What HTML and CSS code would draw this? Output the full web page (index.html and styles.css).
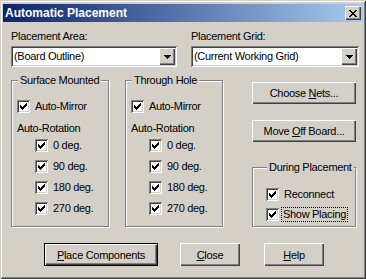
FILE: index.html
```html
<!DOCTYPE html>
<html>
<head>
    <meta http-equiv="Content-Type" content="text/html;charset=UTF-8"/>
    <title>Automatic Placement</title>
    <link rel="stylesheet" href="styles.css">
</head>
<body>
<div class="window">
    <div class="titlebar">
        <span class="title">Automatic Placement</span>
        <span class="close-btn">
            <svg width="8" height="7" viewBox="0 0 8 7" shape-rendering="crispEdges"><path d="M0 0h2v1h-2z M6 0h2v1h-2z M1 1h2v1h-2z M5 1h2v1h-2z M2 2h4v1h-4z M3 3h2v1h-2z M2 4h4v1h-4z M1 5h2v1h-2z M5 5h2v1h-2z M0 6h2v1h-2z M6 6h2v1h-2z" fill="#000"/></svg>
        </span>
    </div>
    <div class="client">
        <div class="fields">
            <div class="field field-area">
                <div class="label">Placement Area:</div>
                <div class="combo">
                    <span class="combo-text">(Board Outline)</span>
                    <span class="drop-btn"><svg width="7" height="4" viewBox="0 0 7 4" shape-rendering="crispEdges"><path d="M0 0h7v1h-7z M1 1h5v1h-5z M2 2h3v1h-3z M3 3h1v1h-1z" fill="#000"/></svg></span>
                </div>
            </div>
            <div class="field field-grid">
                <div class="label">Placement Grid:</div>
                <div class="combo">
                    <span class="combo-text">(Current Working Grid)</span>
                    <span class="drop-btn"><svg width="7" height="4" viewBox="0 0 7 4" shape-rendering="crispEdges"><path d="M0 0h7v1h-7z M1 1h5v1h-5z M2 2h3v1h-3z M3 3h1v1h-1z" fill="#000"/></svg></span>
                </div>
            </div>
        </div>

        <div class="groups">
            <div class="group group-side">
                <span class="group-title">Surface Mounted</span>
                <div class="check-row first"><span class="check"><svg width="7" height="7" viewBox="0 0 7 7" shape-rendering="crispEdges"><path d="M6 0h1v3h-1z M5 1h1v3h-1z M4 2h1v3h-1z M3 3h1v3h-1z M2 4h1v3h-1z M1 3h1v3h-1z M0 2h1v3h-1z"/></svg></span><span>Auto-Mirror</span></div>
                <div class="sub-label">Auto-Rotation</div>
                <div class="rotations">
                    <div class="check-row"><span class="check"><svg width="7" height="7" viewBox="0 0 7 7" shape-rendering="crispEdges"><path d="M6 0h1v3h-1z M5 1h1v3h-1z M4 2h1v3h-1z M3 3h1v3h-1z M2 4h1v3h-1z M1 3h1v3h-1z M0 2h1v3h-1z"/></svg></span><span>0 deg.</span></div>
                    <div class="check-row"><span class="check"><svg width="7" height="7" viewBox="0 0 7 7" shape-rendering="crispEdges"><path d="M6 0h1v3h-1z M5 1h1v3h-1z M4 2h1v3h-1z M3 3h1v3h-1z M2 4h1v3h-1z M1 3h1v3h-1z M0 2h1v3h-1z"/></svg></span><span>90 deg.</span></div>
                    <div class="check-row"><span class="check"><svg width="7" height="7" viewBox="0 0 7 7" shape-rendering="crispEdges"><path d="M6 0h1v3h-1z M5 1h1v3h-1z M4 2h1v3h-1z M3 3h1v3h-1z M2 4h1v3h-1z M1 3h1v3h-1z M0 2h1v3h-1z"/></svg></span><span>180 deg.</span></div>
                    <div class="check-row"><span class="check"><svg width="7" height="7" viewBox="0 0 7 7" shape-rendering="crispEdges"><path d="M6 0h1v3h-1z M5 1h1v3h-1z M4 2h1v3h-1z M3 3h1v3h-1z M2 4h1v3h-1z M1 3h1v3h-1z M0 2h1v3h-1z"/></svg></span><span>270 deg.</span></div>
                </div>
            </div>

            <div class="group group-side group-hole">
                <span class="group-title">Through Hole</span>
                <div class="check-row first"><span class="check"><svg width="7" height="7" viewBox="0 0 7 7" shape-rendering="crispEdges"><path d="M6 0h1v3h-1z M5 1h1v3h-1z M4 2h1v3h-1z M3 3h1v3h-1z M2 4h1v3h-1z M1 3h1v3h-1z M0 2h1v3h-1z"/></svg></span><span>Auto-Mirror</span></div>
                <div class="sub-label">Auto-Rotation</div>
                <div class="rotations">
                    <div class="check-row"><span class="check"><svg width="7" height="7" viewBox="0 0 7 7" shape-rendering="crispEdges"><path d="M6 0h1v3h-1z M5 1h1v3h-1z M4 2h1v3h-1z M3 3h1v3h-1z M2 4h1v3h-1z M1 3h1v3h-1z M0 2h1v3h-1z"/></svg></span><span>0 deg.</span></div>
                    <div class="check-row"><span class="check"><svg width="7" height="7" viewBox="0 0 7 7" shape-rendering="crispEdges"><path d="M6 0h1v3h-1z M5 1h1v3h-1z M4 2h1v3h-1z M3 3h1v3h-1z M2 4h1v3h-1z M1 3h1v3h-1z M0 2h1v3h-1z"/></svg></span><span>90 deg.</span></div>
                    <div class="check-row"><span class="check"><svg width="7" height="7" viewBox="0 0 7 7" shape-rendering="crispEdges"><path d="M6 0h1v3h-1z M5 1h1v3h-1z M4 2h1v3h-1z M3 3h1v3h-1z M2 4h1v3h-1z M1 3h1v3h-1z M0 2h1v3h-1z"/></svg></span><span>180 deg.</span></div>
                    <div class="check-row"><span class="check"><svg width="7" height="7" viewBox="0 0 7 7" shape-rendering="crispEdges"><path d="M6 0h1v3h-1z M5 1h1v3h-1z M4 2h1v3h-1z M3 3h1v3h-1z M2 4h1v3h-1z M1 3h1v3h-1z M0 2h1v3h-1z"/></svg></span><span>270 deg.</span></div>
                </div>
            </div>

            <div class="side-col">
                <div class="btn btn-nets"><span>Choose <u>N</u>ets...</span></div>
                <div class="btn btn-move"><span>Move <u>O</u>ff Board...</span></div>
                <div class="group group-during">
                    <span class="group-title">During Placement</span>
                    <div class="check-row first"><span class="check"><svg width="7" height="7" viewBox="0 0 7 7" shape-rendering="crispEdges"><path d="M6 0h1v3h-1z M5 1h1v3h-1z M4 2h1v3h-1z M3 3h1v3h-1z M2 4h1v3h-1z M1 3h1v3h-1z M0 2h1v3h-1z"/></svg></span><span>Reconnect</span></div>
                    <div class="check-row"><span class="check"><svg width="7" height="7" viewBox="0 0 7 7" shape-rendering="crispEdges"><path d="M6 0h1v3h-1z M5 1h1v3h-1z M4 2h1v3h-1z M3 3h1v3h-1z M2 4h1v3h-1z M1 3h1v3h-1z M0 2h1v3h-1z"/></svg></span><span class="focus">Show Placing</span></div>
                </div>
            </div>
        </div>

        <div class="actions">
            <div class="btn btn-default btn-place"><span><u>P</u>lace Components</span></div>
            <div class="btn btn-close"><span><u>C</u>lose</span></div>
            <div class="btn btn-help"><span><u>H</u>elp</span></div>
        </div>
    </div>
</div>
</body>
</html>
```

FILE: styles.css
```css
* {
    box-sizing: border-box;
}

html, body {
    margin: 0;
    padding: 0;
}

body {
    font-family: "Liberation Sans", Arial, sans-serif;
    font-size: 11px;
    letter-spacing: -0.3px;
    color: #000;
    background: #d4d0c8;
}

.window {
    width: 366px;
    height: 279px;
    background: #d4d0c8;
    padding: 4px 3px 4px 3px;
    box-shadow: inset 1px 1px 0 #d4d0c8, inset -1px -1px 0 #404040,
                inset 2px 2px 0 #fff, inset -2px -2px 0 #808080;
    display: flex;
    flex-direction: column;
}

.titlebar {
    height: 18px;
    display: flex;
    align-items: center;
    padding-left: 2px;
    background: linear-gradient(to right, #0a246a, #a6caf0);
}

.title {
    color: #fff;
    font-weight: bold;
    font-size: 12px;
    letter-spacing: 0;
}

.close-btn {
    width: 16px;
    height: 14px;
    margin-left: auto;
    margin-right: 2px;
    background: #d4d0c8;
    display: flex;
    align-items: center;
    justify-content: center;
    box-shadow: inset 1px 1px 0 #fff, inset -1px -1px 0 #404040, inset -2px -2px 0 #808080;
}

.client {
    padding: 8px 0 0 8px;
}

.label {
    line-height: 13px;
}

.fields {
    display: flex;
    gap: 14px;
}

.field-area {
    width: 166px;
}

.field-grid {
    width: 168px;
}

.combo {
    margin-top: 3px;
    height: 21px;
    background: #fff;
    display: flex;
    align-items: center;
    padding: 2px;
    box-shadow: inset 1px 1px 0 #808080, inset -1px -1px 0 #fff,
                inset 2px 2px 0 #404040, inset -2px -2px 0 #d4d0c8;
}

.combo-text {
    flex: 1;
    padding-left: 1px;
    line-height: 13px;
}

.drop-btn {
    width: 16px;
    height: 17px;
    background: #d4d0c8;
    display: flex;
    align-items: center;
    justify-content: center;
    box-shadow: inset 1px 1px 0 #fff, inset -1px -1px 0 #404040, inset -2px -2px 0 #808080;
}

.groups {
    display: flex;
    margin-top: 13px;
}

.group {
    border: 1px solid #808080;
    box-shadow: 1px 1px 0 #fff, inset 1px 1px 0 #fff;
    display: flex;
    flex-direction: column;
    align-items: flex-start;
}

.group-side {
    width: 98px;
    height: 147px;
    padding-left: 5px;
}

.group-hole {
    margin-left: 16px;
}

.group-title {
    display: block;
    margin: -7px 0 0 1px;
    padding: 0 2px;
    line-height: 13px;
    background: #d4d0c8;
}

.check-row {
    height: 13px;
    display: flex;
    align-items: center;
    gap: 5px;
    line-height: 13px;
}

.check-row.first {
    margin-top: 13px;
}

.check {
    width: 13px;
    height: 13px;
    background: #fff;
    display: flex;
    align-items: center;
    justify-content: center;
    box-shadow: inset 1px 1px 0 #808080, inset -1px -1px 0 #fff,
                inset 2px 2px 0 #404040, inset -2px -2px 0 #d4d0c8;
}

.sub-label {
    margin-top: 9px;
    line-height: 13px;
}

.rotations {
    margin-top: 4px;
    padding-left: 18px;
    display: flex;
    flex-direction: column;
    gap: 8px;
}

.side-col {
    width: 104px;
    margin-left: 29px;
    display: flex;
    flex-direction: column;
}

.btn {
    background: #d4d0c8;
    display: flex;
    align-items: center;
    justify-content: center;
    box-shadow: inset 1px 1px 0 #fff, inset -1px -1px 0 #404040, inset -2px -2px 0 #808080;
}

.btn-nets {
    margin-top: 2px;
    height: 22px;
}

.btn-move {
    margin-top: 16px;
    height: 22px;
}

.group-during {
    margin-top: 25px;
    height: 60px;
    padding-left: 13px;
}

.group-during .check-row.first {
    margin-top: 14px;
}

.group-during .check-row + .check-row {
    margin-top: 7px;
}

.focus {
    outline: 1px dotted #000;
    padding: 0 1px;
    margin-left: -2px;
}

.actions {
    display: flex;
    margin: 16px 0 0 33px;
    height: 23px;
}

.btn-default {
    border: 1px solid #000;
}

.btn-place {
    width: 114px;
}

.btn-close {
    width: 60px;
    margin-left: 22px;
}

.btn-help {
    width: 60px;
    margin-left: 24px;
}
```
